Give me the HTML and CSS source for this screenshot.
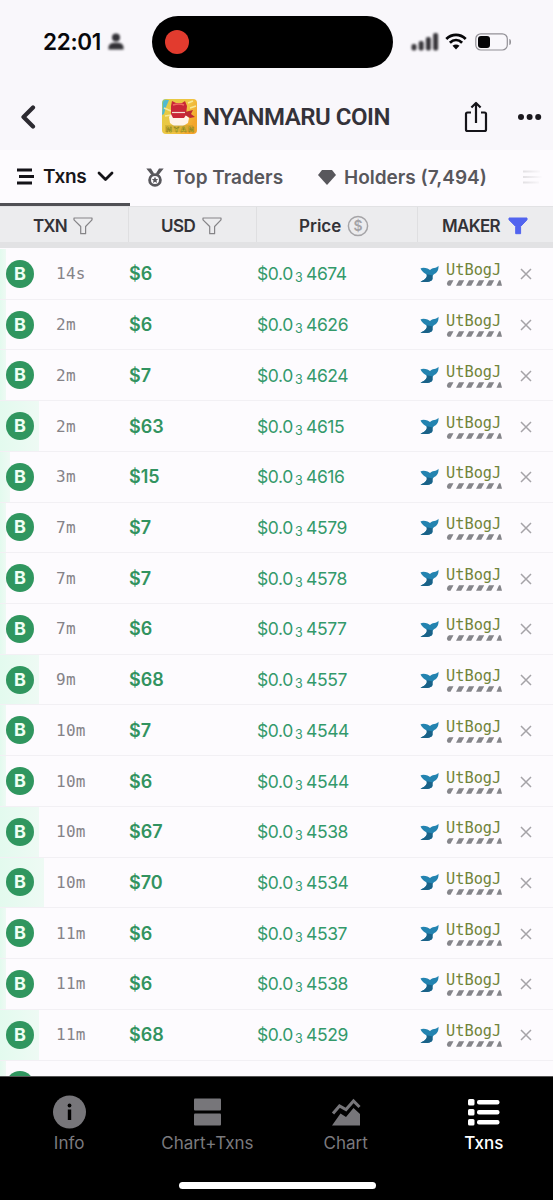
FILE: index.html
```html
<!DOCTYPE html>
<html lang="en">
<head>
<meta charset="utf-8">
<title>NYANMARU COIN</title>
<link rel="stylesheet" href="styles.css">
</head>
<body>
<svg class="defs" width="0" height="0">
  <defs>
    <symbol id="funnel" viewBox="0 0 20 18"><path d="M1 1h18v1.800l-6.400 6.700v7.200H7.700V9.500L1 2.800z" stroke-linejoin="round"/></symbol>
    <symbol id="whale" viewBox="0 0 19 18">
      <path d="M.5 3.500C2 2.500 5 2.600 7.500 3.500c1 .4 1.800.8 2.500 1.500 1.500-1.800 4-2 5.500-2.300C16.700 2.300 17.700 1.700 18.500.800c.2 3-.6 5.700-2.500 7.200-1 .9-2.500 1.300-3.200 2.400-.8 1.300.2 2.400-.5 4.100C11.300 17 5 17.600.500 16.700c2.300-.9 5.500-3 6.200-5 .5-1.700-.5-2.500-1.700-3.300C3 7.200 1.500 5.800.500 3.500z" fill="#2383b0"/>
      <path d="M7 9.200l5.800 1.200c-.8 1.300.2 2.400-.5 4.100C11.300 17 5 17.600.500 16.700c2.300-.9 5.500-3 6.200-5z" fill="#1a6288"/>
    </symbol>
  </defs>
</svg>
<div class="screen">
  <header class="top">
    <div class="status">
      <span class="clock">22:01</span>
      <svg class="person" width="18" height="19" viewBox="0 0 18 19"><circle cx="9" cy="5.500" r="4"/><path d="M1.500 17.500v-2c0-3 2.500-4.500 5-4.800h5c2.500.3 5 1.800 5 4.800v2z"/></svg>
      <div class="island"><span class="rec"></span></div>
      <svg class="signal" width="30" height="20" viewBox="0 0 30 20"><rect x="1.500" y="12" width="5" height="6.500" rx="2"/><rect x="8.700" y="9" width="5" height="9.500" rx="2"/><rect x="15.900" y="5" width="5" height="13.500" rx="2"/><rect x="23.100" y="1" width="5" height="17.500" rx="2"/></svg>
      <svg class="wifi" width="22" height="17" viewBox="0 0 22 17" fill="none" stroke="#060608" stroke-width="2.800"><path d="M1.300 6c5.700-5.400 13.700-5.400 19.400 0"/><path d="M4.900 9.700c3.700-3.500 8.500-3.500 12.200 0"/><path d="M11 16.500l-3.500-3.700q3.500-2.800 7 0z" fill="#060608" stroke="none"/></svg>
      <svg class="battery" width="37" height="18" viewBox="0 0 37 18"><rect x=".8" y=".8" width="31.500" height="16.200" rx="5" fill="none" stroke="#929096" stroke-width="1.200"/><rect x="3" y="3" width="12" height="12" rx="3" fill="#050507"/><path d="M34.300 6q1.700 0 1.700 3t-1.700 3z" fill="#929096"/></svg>
    </div>
    <div class="title">
      <svg class="back" width="16" height="24" viewBox="0 0 16 24"><path d="M13 2.500 3.500 12l9.500 9.500" fill="none" stroke="#2c2a30" stroke-width="4.200" stroke-linecap="round" stroke-linejoin="round"/></svg>
      <svg class="coin" width="35" height="35" viewBox="0 0 35 35">
        <defs><linearGradient id="sun" x1="0" x2="1" y2=".5"><stop offset="0" stop-color="#70c98c"/><stop offset=".15" stop-color="#e5cc45"/><stop offset=".7" stop-color="#f0c241"/><stop offset="1" stop-color="#f3a52b"/></linearGradient></defs>
        <rect width="35" height="35" rx="4" fill="url(#sun)"/>
        <path d="M1 4q0-3 3-3h3L4 8 2 15 0 16z" fill="#51bad0"/>
        <path d="M2 9l7 3M3 17l6-1M26 4l5-2M28 9l6-2" stroke="#f8e897" stroke-width="1.500"/>
        <path d="M7 18l3-4 13 1 4 4-1 5-5 3H12l-4-3z" fill="#fff3e9"/>
        <path d="M9 7l1-5 4 2h6l3-2 2 5-1 9-2 3H11l-2-4z" fill="#c92637"/>
        <path d="M23 13l8-2-2 4 4 3-5 1-5-3z" fill="#bd2934"/>
        <path d="M11 6q6-2 11 0" stroke="#f06a61" fill="none" stroke-width="1.500"/>
        <path d="M10 13.500h13" stroke="#f3ddd2" stroke-width="1.200"/>
        <path d="M3 26h28v7H3z" fill="#b69a2a" opacity=".4"/>
        <text x="4" y="33" class="coin-text" textLength="28">NYAN</text>
      </svg>
      <h1>NYANMARU COIN</h1>
      <svg class="share" width="24" height="32" viewBox="0 0 24 32" fill="none" stroke="#151419" stroke-width="2.200" stroke-linejoin="round"><path d="M7 11.500H3.500Q2 11.500 2 13v15.500Q2 30 3.500 30h17q1.500 0 1.500-1.500V13q0-1.500-1.500-1.500H17M12 22V2.500M7.400 6.500 12 2l4.600 4.500"/></svg>
      <svg class="dots" width="24" height="6" viewBox="0 0 24 6" fill="#1b191e"><circle cx="3" cy="3" r="3"/><circle cx="11.600" cy="3" r="3"/><circle cx="20.200" cy="3" r="3"/></svg>
    </div>
  </header>
  <nav class="tabs">
    <div class="tab active">
      <svg width="19" height="17" viewBox="0 0 19 17" stroke="#141318" stroke-width="3"><path d="M1 2h15M3 8.500h15M1 15h15"/></svg>
      <span class="t-txns">Txns</span>
      <svg class="chev" width="17" height="11" viewBox="0 0 17 11"><path d="M2 2l6.500 6.500L15 2" fill="none" stroke="#141318" stroke-width="2.800" stroke-linecap="round" stroke-linejoin="round"/></svg>
    </div>
    <div class="tab traders">
      <svg width="18" height="19" viewBox="0 0 18 19"><path d="M.3.500H5l3.100 5L5.500 7zM17.700.500H13l-3.100 5L12.500 7z" fill="#58575c"/><circle cx="9" cy="12" r="5.400" fill="none" stroke="#58575c" stroke-width="2.800"/><path d="M9 8.800l1 2.100 2.200.2-1.700 1.500.5 2.300-2-1.200-2 1.200.5-2.300-1.700-1.500 2.200-.2z" fill="#58575c"/></svg>
      <span class="t-top">Top Traders</span>
    </div>
    <div class="tab holders">
      <svg width="18" height="15" viewBox="0 0 18 15"><path d="M4 0h10l4 5-9 10L0 5z" fill="#58575c"/></svg>
      <span class="t-hold">Holders (7,494)</span>
    </div>
    <svg class="more" width="20" height="14" viewBox="0 0 20 14"><defs><linearGradient id="fade" gradientUnits="userSpaceOnUse" x1="0" x2="20" y1="0" y2="0"><stop stop-color="#e2e0e3"/><stop offset="1" stop-color="#fdfbfe"/></linearGradient></defs><path d="M0 1.500h17M0 7h19M0 12.500h16" stroke="url(#fade)" stroke-width="2.200"/></svg>
  </nav>
  <div class="columns">
    <div class="col c1"><span class="h-txn">TXN</span><svg class="outline" width="20" height="18"><use href="#funnel"/></svg></div>
    <div class="col c2"><span class="h-usd">USD</span><svg class="outline" width="20" height="18"><use href="#funnel"/></svg></div>
    <div class="col c3"><span class="h-price">Price</span><svg class="dollar" width="22" height="22" viewBox="0 0 22 22"><circle cx="11" cy="11" r="9.600" fill="none" stroke="#a5a4a7" stroke-width="1.500"/><text x="11" y="16" text-anchor="middle">$</text></svg></div>
    <div class="col c4"><span class="h-maker">MAKER</span><svg class="filled" width="20" height="18"><use href="#funnel"/></svg></div>
  </div>
  <main class="rows" id="rows"></main>
  <footer class="bottom">
    <div class="items">
      <div class="item"><svg width="34" height="34" viewBox="0 0 34 34"><circle cx="17.500" cy="17" r="16.500" fill="#77767a"/><circle cx="17.500" cy="10.500" r="1.900"/><path d="M15.800 14.500h3.400V25h-3.400z"/></svg><span>Info</span></div>
      <div class="item"><svg width="34" height="34" viewBox="0 0 34 34" fill="#77767a"><rect x="4" y="3.500" width="27" height="12" rx="1"/><rect x="4" y="18.500" width="27" height="12" rx="1"/></svg><span>Chart+Txns</span></div>
      <div class="item"><svg width="34" height="34" viewBox="0 0 34 34"><path d="M3 30.500 11.500 18.500l5.500 3.500L24.500 13l6.500 6v11.500z" fill="#77767a"/><path d="M4 18.500 10.500 11l6.500 3.500L24.500 6l6 6" fill="none" stroke="#77767a" stroke-width="3"/></svg><span>Chart</span></div>
      <div class="item on"><svg width="34" height="34" viewBox="0 0 34 34" fill="#fff"><rect x="1" y="4" width="6.500" height="6.500" rx="1.500"/><rect x="1" y="14" width="6.500" height="6.500" rx="1.500"/><rect x="1" y="24" width="6.500" height="6.500" rx="1.500"/><rect x="10" y="5" width="22.500" height="4.600" rx="2"/><rect x="10" y="15" width="22.500" height="4.600" rx="2"/><rect x="10" y="25" width="22.500" height="4.600" rx="2"/></svg><span>Txns</span></div>
    </div>
    <div class="home"></div>
  </footer>
</div>
<script src="rows.js"></script>
</body>
</html>
```
FILE: styles.css
```css
* { box-sizing: border-box; }
body { margin: 0; background: #fdfbfe; font-family: "Inter", "Liberation Sans", sans-serif; }
.defs { position: absolute; }
svg { display: block; flex: none; }
.screen { width: 553px; height: 1200px; overflow: hidden; display: flex; flex-direction: column; }
.top { height: 150px; flex: none; background: #f9f7fb; }
.status { height: 83px; display: flex; align-items: center; padding-left: 43px; }
.clock { width: 58px; font-size: 22.500px; font-weight: 600; line-height: 28px; letter-spacing: -.3px; color: #08080b; white-space: nowrap; }
.person { margin-left: 6px; filter: blur(.8px); fill: #333237; }
.island { width: 241px; height: 52px; margin-left: 27px; border-radius: 26px; background: #000; display: flex; align-items: center; padding-left: 13px; }
.rec { width: 24px; height: 24px; border-radius: 50%; background: #e23b2e; }
.signal { margin-left: 17px; filter: blur(.9px); fill: #39373c; }
.wifi { margin-left: 5px; }
.battery { margin-left: 8px; }
.title { height: 67px; display: flex; align-items: center; padding-left: 20px; }
.back { margin-right: 126px; }
.coin-text { font: bold 8px "Liberation Sans", sans-serif; fill: #efe341; stroke: #776d18; stroke-width: .5px; }
h1 { margin: 0 0 0 6px; width: 188px; font-family: "Roboto", sans-serif; font-size: 24px; line-height: 30px; font-weight: 600; color: #343239; white-space: nowrap; letter-spacing: -.48px; }
.share { margin-left: 73px; }
.dots { margin-left: 30px; }
.tabs { height: 57px; flex: none; display: flex; color: #58575c; font-size: 19px; font-weight: 600; white-space: nowrap; }
.tab { height: 54px; display: flex; align-items: center; }
.active { width: 130px; border-bottom: 3px solid #505055; padding: 0 0 0 16px; color: #17161a; height: 56px; }
.t-txns { margin-left: 8px; width: 43px; letter-spacing: -.3px; }
.chev { margin-left: 11px; }
.traders { margin-left: 16px; }
.t-top { margin-left: 9px; width: 112px; }
.holders { margin-left: 33px; }
.t-hold { margin-left: 8px; width: 144px; }
.more { margin: 20px 0 0 35px; }
.columns { height: 42px; margin-top: -1px; flex: none; display: flex; background: #ececee; border-top: 1px solid #e2e2e4; border-bottom: 6px solid #e2e2e4; color: #333237; font-size: 17px; font-weight: 600; }
.col { height: 35px; display: flex; align-items: center; padding-top: 2px; white-space: nowrap; }
.c1 { width: 129px; padding-left: 33px; border-right: 1px solid #dfdfe1; }
.c2 { width: 128px; padding-left: 32px; border-right: 1px solid #dfdfe1; }
.c3 { width: 161px; padding-left: 42px; border-right: 1px solid #dfdfe1; }
.c4 { flex: 1; padding-left: 24px; }
.h-txn { width: 33px; letter-spacing: -.9px; }
.h-usd { width: 34px; letter-spacing: -.5px; }
.h-price { width: 42px; }
.h-maker { width: 58px; letter-spacing: -.7px; }
.col svg { margin-left: 7px; }
.col .dollar { margin-left: 6px; }
.col .filled { margin-left: 8px; }
.outline { fill: none; stroke: #858487; stroke-width: 1.200; }
.filled { fill: #5264ef; stroke: #5264ef; }
.dollar text { font: 600 14px "Inter", sans-serif; fill: #a5a4a7; }
.rows { height: 828px; flex: none; overflow: hidden; padding-top: 1px; }
.row { height: 50.730px; border-bottom: 1px solid #f2f0f4; display: flex; align-items: center; background-repeat: no-repeat; background-size: var(--bar) 100%; background-image: linear-gradient(90deg, #e3faee, #eefaf4); }
.side { width: 28px; height: 28px; margin-left: 6px; border-radius: 50%; background: #30965f; color: #effff4; text-align: center; font: 700 18px/28px "Inter", sans-serif; }
.age { margin-left: 22px; width: 73px; padding-top: 1px; color: #858388; font: 16px/24px "DejaVu Sans Mono", monospace; letter-spacing: .3px; }
.usd { width: 128px; color: #329360; font-size: 18px; font-weight: 600; }
.price { width: 163px; display: flex; align-items: center; color: #33996b; font-size: 17.500px; white-space: nowrap; }
.lead { width: 38px; letter-spacing: -.4px; }
.sub { width: 11px; font-size: 12.500px; padding-top: 8px; }
.digits { letter-spacing: -.4px; }
.maker { margin-left: 7px; width: 57px; height: 25px; display: flex; flex-direction: column; gap: 1px; color: #71843b; font: 15.300px/18px "DejaVu Sans Mono", monospace; }
.close { margin: 1px 0 0 17px; }
.bottom { flex: 1; background: #000; border-top: 1px solid #555; padding: 18px 0 0; }
.items { display: flex; }
.item { width: 138.300px; display: flex; flex-direction: column; align-items: center; color: #7b7a7e; font-size: 17px; line-height: 22px; }
.item span { margin-top: 3px; white-space: nowrap; }
.on { color: #fff; font-weight: 500; }
.home { width: 197px; height: 7px; border-radius: 4px; background: #fff; margin: 28px 0 0 179px; }
```
FILE: rows.js
```js
const trades = [
  ["14s", 6, 4674, 6], ["2m", 6, 4626, 6], ["2m", 7, 4624, 6], ["2m", 63, 4615, 39],
  ["3m", 15, 4616, 10], ["7m", 7, 4579, 6], ["7m", 7, 4578, 6], ["7m", 6, 4577, 6],
  ["9m", 68, 4557, 39], ["10m", 7, 4544, 6], ["10m", 6, 4544, 6], ["10m", 67, 4538, 39],
  ["10m", 70, 4534, 44], ["11m", 6, 4537, 6], ["11m", 6, 4538, 6], ["11m", 68, 4529, 39]
];
const stripes = [10, 20, 30, 40].map(x =>
  `<path d="M${x + 3} .3h5.200l-3 5.400h-5.200z" fill="#85858a"/>`).join("");
document.getElementById("rows").innerHTML = trades.map(([age, usd, price, bar]) => `
  <div class="row" style="--bar:${bar}px">
    <span class="side">B</span>
    <span class="age">${age}</span>
    <span class="usd">$${usd}</span>
    <span class="price"><span class="lead">$0.0</span><span class="sub">3</span><span class="digits">${price}</span></span>
    <svg width="19" height="18"><use href="#whale"/></svg>
    <span class="maker"><span class="name">UtBogJ</span><svg width="56" height="6" viewBox="0 0 56 6"><path d="M3 .3h4.500l-3 5.400H2Q-.5 3 3 .3z" fill="#85858a"/>${stripes}<path d="M53 .3h1.500l1.500 5.400h-5.500z" fill="#85858a"/></svg></span>
    <svg class="close" width="12" height="12" viewBox="0 0 12 12"><path d="M1 1l10 10M11 1 1 11" stroke="#a5a3a7" stroke-width="1.500"/></svg>
  </div>`).join("") + `<div class="row" style="--bar:6px"><span class="side"></span></div>`;
```
